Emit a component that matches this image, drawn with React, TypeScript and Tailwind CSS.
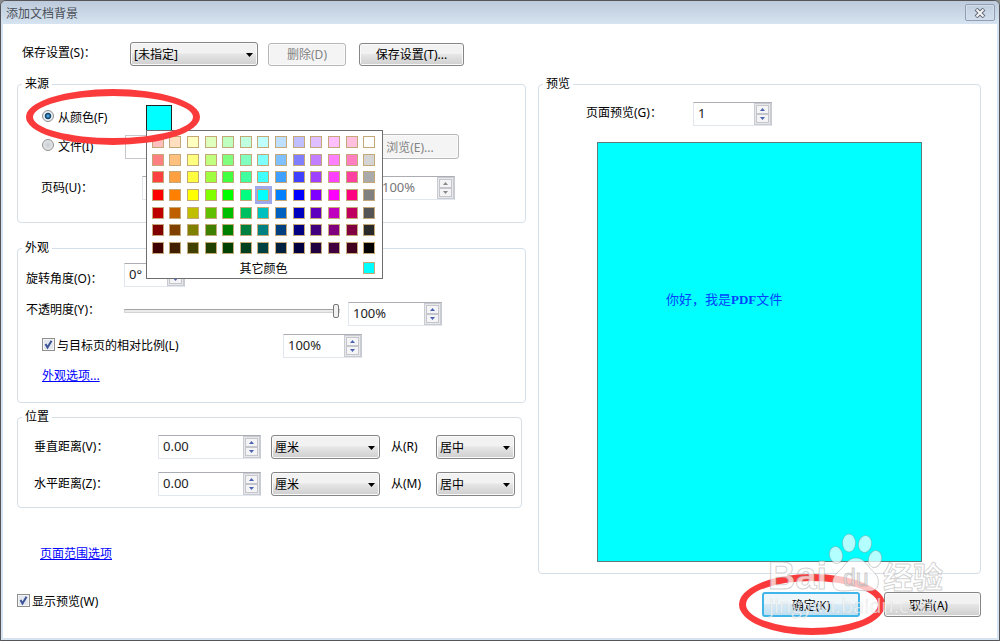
import { useState } from 'react';
import type { ReactNode } from 'react';

const HUES = [
  [255, 0, 0],
  [255, 128, 0],
  [255, 255, 0],
  [128, 255, 0],
  [0, 255, 0],
  [0, 255, 128],
  [0, 255, 255],
  [0, 128, 255],
  [0, 0, 255],
  [128, 0, 255],
  [255, 0, 255],
  [255, 0, 128],
];
const GRAYS = [255, 212, 170, 128, 85, 42, 0];
// positive values mix towards white, negative ones towards black
const SHADES = [0.75, 0.5, 0.25, 0, -0.25, -0.5, -0.75];

const PALETTE = SHADES.flatMap((shade, row) => [
  ...HUES.map((rgb) =>
    rgb.map((c) => Math.round(shade > 0 ? c + (255 - c) * shade : c * (1 + shade))).join(', ')
  ),
  [GRAYS[row], GRAYS[row], GRAYS[row]].join(', '),
]);

function Group({ title, className = '', children }: { title: string; className?: string; children: ReactNode }) {
  return (
    <fieldset className={`min-w-0 rounded-[4px] border border-[#d5dfe8] px-1 ${className}`}>
      <legend className="px-[3px] leading-4">{title}</legend>
      {children}
    </fieldset>
  );
}

function Spinner({ id, value, label, className = '', disabled = false }: {
  id?: string;
  value: string;
  label?: string;
  className?: string;
  disabled?: boolean;
}) {
  return (
    <div className={`flex h-6 shrink-0 border border-[#e2e6ee] border-t-[#abadb3] border-r-[#c8cbd2] bg-white ${className}`}>
      <input
        id={id}
        aria-label={label}
        disabled={disabled}
        defaultValue={value}
        className="w-full min-w-0 flex-1 bg-transparent pb-0.5 pl-1 text-[13px] leading-4 text-[#222] outline-none disabled:text-[#777]"
      />
      <div className="flex w-[17px] flex-col border border-[#c8cbd2] bg-[#e8e8ea] p-px">
        <button type="button" aria-label="增加" disabled={disabled} className="flex flex-1 items-center justify-center border border-[#c4c6cc] bg-[#f4f4f6] text-[#4a62b0] disabled:text-[#888]">
          <svg width="5" height="3" viewBox="0 0 5 3"><path d="M0 3L2.5 0L5 3Z" fill="currentColor" /></svg>
        </button>
        <button type="button" aria-label="减少" disabled={disabled} className="flex flex-1 items-center justify-center border border-[#c4c6cc] bg-[#f4f4f6] text-[#4a62b0] disabled:text-[#888]">
          <svg width="5" height="3" viewBox="0 0 5 3"><path d="M0 0L2.5 3L5 0Z" fill="currentColor" /></svg>
        </button>
      </div>
    </div>
  );
}

function Select({ id, label, option, className = '' }: { id?: string; label?: string; option: string; className?: string }) {
  return (
    <div className={`relative h-6 shrink-0 ${className}`}>
      <select
        id={id}
        aria-label={label}
        className="h-full w-full appearance-none rounded-[3px] border border-[#858585] bg-linear-to-b from-[#f2f2f2] from-45% via-[#e6e6e6] via-50% to-[#cfcfcf] pt-0.5 pl-[3px] text-[12px] shadow-[inset_0_0_0_1px_#fafafa]"
      >
        <option>{option}</option>
      </select>
      <svg className="pointer-events-none absolute top-[11px] right-[5px]" width="7" height="4" viewBox="0 0 7 4">
        <path d="M0 0H7L3.5 4Z" fill="#000" />
      </svg>
    </div>
  );
}

function Checkbox({ id, children }: { id: string; children: ReactNode }) {
  return (
    <div className="flex items-start gap-0.5">
      <span className="grid">
        <input
          id={id}
          type="checkbox"
          defaultChecked
          className="peer col-start-1 row-start-1 size-[13px] appearance-none border border-[#8e8f8f] bg-[#e4e8ee] shadow-[inset_0_0_0_1px_#f4f4f4]"
        />
        <svg className="pointer-events-none invisible col-start-1 row-start-1 peer-checked:visible" width="13" height="13" viewBox="0 0 13 13" fill="none">
          <path d="M3.5 6L5.5 9.5L9.5 2.8" stroke="#3d5496" strokeWidth="2" />
        </svg>
      </span>
      <label htmlFor={id} className="leading-4">{children}</label>
    </div>
  );
}

function Radio({ id, checked, onChange, children }: { id: string; checked: boolean; onChange: () => void; children: ReactNode }) {
  return (
    <div className="flex items-start gap-1">
      <input
        id={id}
        type="radio"
        name="source"
        checked={checked}
        onChange={onChange}
        className="size-3 appearance-none rounded-full border border-[#8e8f8f] bg-[radial-gradient(circle,#c8cdd2,#f0f0f0)] checked:bg-[radial-gradient(circle_at_50%_50%,#6fc4ee_0,#1b5f90_28%,#123f66_40%,#e8eef2_52%)]"
      />
      <label htmlFor={id} className="leading-4">{children}</label>
    </div>
  );
}

function PushButton({ children, className = '', disabled = false }: { children: ReactNode; className?: string; disabled?: boolean }) {
  return (
    <button
      type="button"
      disabled={disabled}
      className={`shrink-0 rounded-[3px] border border-[#858585] bg-linear-to-b from-[#f2f2f2] from-45% via-[#e6e6e6] via-50% to-[#cfcfcf] pt-0.5 shadow-[inset_0_0_0_1px_#fafafa] disabled:border-[#b5b8bb] disabled:bg-[#f4f4f4] disabled:bg-none disabled:text-[#838383] ${className}`}
    >
      {children}
    </button>
  );
}

function ColorPopup({ selected, onSelect }: { selected: string; onSelect: (rgb: string) => void }) {
  return (
    <div className="absolute top-[25px] left-0 z-20 w-[237px] border border-[#6e6e6e] bg-white pt-0.5 pr-1 pl-0.5">
      <div className="grid h-[124px] auto-rows-fr grid-cols-13">
        {PALETTE.map((rgb, i) => (
          <button
            key={i}
            type="button"
            aria-label={rgb}
            onClick={() => onSelect(rgb)}
            className={`flex items-center justify-center ${rgb === selected ? 'bg-[#a0a8ec]' : ''}`}
          >
            <span className="size-3 border border-[#c5a878]" style={{ backgroundColor: `rgb(${rgb})` }} />
          </button>
        ))}
      </div>
      <div className="grid h-[21px] grid-cols-13 items-center">
        <button type="button" className="col-span-11 col-start-2 pt-0.5 leading-4">其它颜色</button>
        <span className="mx-auto size-3 border border-[#c5a878]" style={{ backgroundColor: `rgb(${selected})` }} />
      </div>
    </div>
  );
}

function Watermark() {
  return (
    <svg
      className="pointer-events-none absolute -top-[59px] right-[33px] z-40"
      width="182"
      height="90"
      viewBox="0 0 182 90"
      fill="#fff"
      fillOpacity="0.7"
      stroke="#8c8c8c"
      strokeOpacity="0.4"
    >
      <text x="2" y="56" fontSize="38" fontWeight="700" fontFamily="Liberation Sans, sans-serif">Bai</text>
      <ellipse cx="70" cy="22" rx="6.5" ry="8.5" transform="rotate(-12 70 22)" />
      <ellipse cx="83" cy="10" rx="6.5" ry="9" />
      <ellipse cx="99" cy="11" rx="6.5" ry="8.5" transform="rotate(10 99 11)" />
      <ellipse cx="109" cy="26" rx="6.5" ry="8.5" transform="rotate(15 109 26)" />
      <path d="M90 25C96 25 99 29 103 34C108 40 114 43 112 52C110 60 102 58 90 57C78 58 69 60 67 52C65 43 72 40 77 34C81 29 84 25 90 25Z" />
      <text x="77" y="53" fontSize="23" fontFamily="Liberation Sans, sans-serif" fill="#e8e8e8" fillOpacity="0.6">du</text>
      <text x="117" y="55" fontSize="30" fontWeight="700" fontFamily="Noto Sans CJK SC, sans-serif">经验</text>
      <text x="3" y="80" fontSize="20" fontFamily="Open Sans, sans-serif" strokeOpacity="0.15">jingyan.baidu.com</text>
    </svg>
  );
}

export default function App() {
  const [source, setSource] = useState('color');
  const [color, setColor] = useState('0, 255, 255');

  return (
    <div className="bg-[#8a8a8a] font-['Noto_Sans','Noto_Sans_CJK_SC',sans-serif] text-[12px] leading-4 text-black">
      <div className="flex min-h-screen flex-col rounded-t-[6px] border border-[#55555a] bg-[#d6e3f0]">
        {/* Title bar */}
        <header className="flex h-[23px] items-center justify-between rounded-t-[5px] bg-linear-to-b from-[#bccadb] to-[#d6e3f0] pr-1 pl-[5px]">
          <h1 className="pt-0.5 text-[#4a4f57]">添加文档背景</h1>
          <button type="button" aria-label="关闭" className="flex h-[17px] w-[30px] items-center justify-center rounded-[2px] border border-[#919db5] shadow-[inset_0_0_0_1px_#d5dfec]">
            <svg width="12" height="10" viewBox="0 0 12 10" fill="none">
              <path d="M2 1L10 9M10 1L2 9" stroke="#666b7c" strokeWidth="4" />
              <path d="M2.5 1.5L9.5 8.5M9.5 1.5L2.5 8.5" stroke="#f5f5f5" strokeWidth="2" />
            </svg>
          </button>
        </header>

        <main className="mx-0.5 mb-0.5 flex-1 bg-white pt-[18px] pr-4 pb-[21px] pl-3.5">
          {/* Saved settings */}
          <div className="flex items-center pl-[5px]">
            <label htmlFor="preset" className="w-[108px] pb-0.5">保存设置(S)：</label>
            <Select id="preset" option="[未指定]" className="w-32" />
            <PushButton disabled className="ml-2.5 h-[23px] w-[78px]">删除(D)</PushButton>
            <PushButton className="ml-[13px] h-[23px] w-[105px]">保存设置(T)...</PushButton>
          </div>

          <div className="mt-2.5 grid grid-cols-[509fr_443fr] gap-3">
            <div>
              {/* Source */}
              <Group title="来源" className="pb-[22px]">
                <div className="relative mt-[13px] ml-5 flex items-center">
                  <div className="w-[104px]">
                    <Radio id="from-color" checked={source === 'color'} onChange={() => setSource('color')}>从颜色(F)</Radio>
                  </div>
                  <div className="relative">
                    <button
                      type="button"
                      aria-label="颜色"
                      className="block size-[26px] border border-[#222]"
                      style={{ backgroundColor: `rgb(${color})` }}
                    />
                    <ColorPopup selected={color} onSelect={setColor} />
                  </div>
                  <div className="pointer-events-none absolute -top-4 -left-4 z-30 h-14 w-[174px] rounded-[50%] border-[7px] border-[#fb3b3b]" />
                </div>
                <div className="mt-[3px] ml-5 flex items-center">
                  <div className="w-[83px]">
                    <Radio id="from-file" checked={source === 'file'} onChange={() => setSource('file')}>文件(I)</Radio>
                  </div>
                  <input type="text" disabled aria-label="文件" className="h-6 w-[230px] border border-[#c4c7cd] bg-white" />
                  <PushButton disabled className="ml-1.5 h-[25px] w-[98px]">浏览(E)...</PushButton>
                </div>
                <div className="mt-[17px] ml-[19px] flex items-center">
                  <label htmlFor="page-number" className="w-[101px]">页码(U)：</label>
                  <Spinner id="page-number" value="" disabled className="w-[70px]" />
                  <Spinner label="缩放" value="100%" disabled className="ml-[165px] w-[78px]" />
                </div>
              </Group>

              {/* Appearance */}
              <Group title="外观" className="mt-[17px] pb-[18px]">
                <div className="mt-[7px] ml-1 flex items-end">
                  <label htmlFor="rotation" className="w-[98px]">旋转角度(O)：</label>
                  <Spinner id="rotation" value="0°" className="w-[61px]" />
                </div>
                <div className="mt-[15px] ml-1 flex items-start">
                  <label htmlFor="opacity" className="w-[98px]">不透明度(Y)：</label>
                  <input
                    id="opacity"
                    type="range"
                    defaultValue={100}
                    className="h-[18px] w-[216px] appearance-none bg-transparent [&::-webkit-slider-runnable-track]:h-1 [&::-webkit-slider-runnable-track]:border [&::-webkit-slider-runnable-track]:border-[#d4d4d4] [&::-webkit-slider-runnable-track]:border-t-[#a4a4a4] [&::-webkit-slider-runnable-track]:bg-[#eaeaea] [&::-webkit-slider-thumb]:-mt-1.5 [&::-webkit-slider-thumb]:h-3.5 [&::-webkit-slider-thumb]:w-1.5 [&::-webkit-slider-thumb]:appearance-none [&::-webkit-slider-thumb]:rounded-[2px] [&::-webkit-slider-thumb]:border [&::-webkit-slider-thumb]:border-[#777] [&::-webkit-slider-thumb]:bg-[#f0f0f0]"
                  />
                  <Spinner label="不透明度" value="100%" className="ml-2 w-[94px]" />
                </div>
                <div className="mt-2 ml-5 flex items-center">
                  <div className="w-[241px]">
                    <Checkbox id="relative-scale">与目标页的相对比例(L)</Checkbox>
                  </div>
                  <Spinner label="相对比例" value="100%" className="w-[79px]" />
                </div>
                <div className="mt-2.5 ml-5">
                  <a href="#appearance" className="text-[#0000ff] underline">外观选项...</a>
                </div>
              </Group>

              {/* Position */}
              <Group title="位置" className="mt-1.5 mr-1 pb-[11px]">
                <div className="mt-2.5 ml-3 flex items-center">
                  <label htmlFor="vertical" className="w-[124px]">垂直距离(V)：</label>
                  <Spinner id="vertical" value="0.00" className="w-[103px]" />
                  <Select label="垂直单位" option="厘米" className="ml-2.5 w-[109px]" />
                  <label htmlFor="from-r" className="ml-[11px] w-[45px]">从(R)</label>
                  <Select id="from-r" option="居中" className="w-[79px]" />
                </div>
                <div className="mt-[13px] ml-3 flex items-center">
                  <label htmlFor="horizontal" className="w-[124px]">水平距离(Z)：</label>
                  <Spinner id="horizontal" value="0.00" className="w-[103px]" />
                  <Select label="水平单位" option="厘米" className="ml-2.5 w-[109px]" />
                  <label htmlFor="from-m" className="ml-[11px] w-[45px]">从(M)</label>
                  <Select id="from-m" option="居中" className="w-[79px]" />
                </div>
              </Group>

              <div className="mt-[38px] ml-[23px]">
                <a href="#page-range" className="text-[#0000ff] underline">页面范围选项</a>
              </div>
            </div>

            {/* Preview */}
            <Group title="预览" className="pb-[11px]">
              <div className="mt-2.5 ml-[43px] flex items-center">
                <label htmlFor="preview-page" className="w-[107px] pb-0.5">页面预览(G)：</label>
                <Spinner id="preview-page" value="1" className="w-[79px]" />
              </div>
              <div
                className="mx-auto mt-4 h-[420px] w-[325px] border border-[#5c7c7c] pt-[149px] pl-[68px] font-['Liberation_Serif','Noto_Sans_CJK_SC',serif] text-[13px] text-[#0044ff]"
                style={{ backgroundColor: `rgb(${color})` }}
              >
                你好，我是<b>PDF</b>文件
              </div>
            </Group>
          </div>

          {/* Footer */}
          <footer className="relative mt-[18px] flex items-start justify-between">
            <div className="pt-0.5">
              <Checkbox id="show-preview">显示预览(W)</Checkbox>
            </div>
            <div className="flex gap-6">
              <div className="relative">
                <button
                  type="button"
                  className="h-[25px] w-[98px] rounded-[3px] border-2 border-[#3fb5e8] bg-linear-to-b from-[#eef6fa] from-45% via-[#d8eaf5] via-50% to-[#bfe0f2] pt-0.5"
                >
                  确定(K)
                </button>
                <div className="pointer-events-none absolute -top-[18px] -left-[23px] z-30 h-[61px] w-[146px] rounded-[50%] border-[7px] border-[#fb3b3b]" />
              </div>
              <PushButton className="h-[25px] w-[97px] pr-2">取消(A)</PushButton>
            </div>
            <Watermark />
          </footer>
        </main>
      </div>
    </div>
  );
}
